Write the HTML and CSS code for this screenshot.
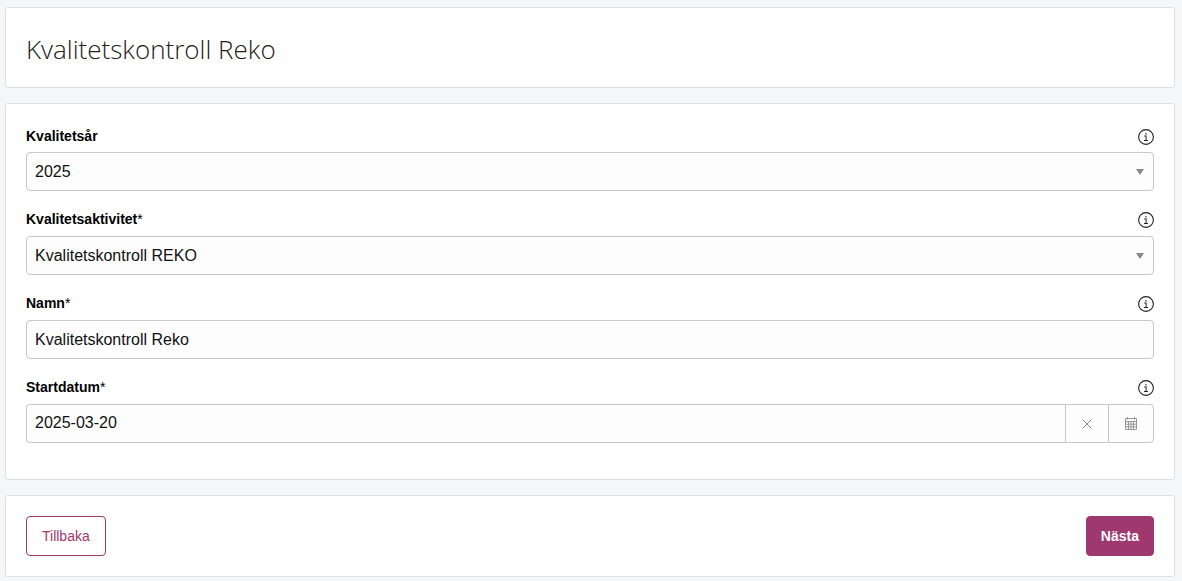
FILE: index.html
```html
<!DOCTYPE html>
<html lang="sv">

<head>
  <meta charset="UTF-8">
  <meta name="viewport" content="width=device-width, initial-scale=1.0">
  <title>Kvalitetskontroll Reko</title>
  <link rel="stylesheet" href="styles.css">
</head>

<body>

  <!-- Shared info icon -->
  <svg class="sprite" aria-hidden="true">
    <symbol id="info" viewBox="0 0 16 16">
      <circle cx="8" cy="8" r="7.4" fill="none" stroke="#222" stroke-width="1.1" />
      <path d="M7.3 4.2h1.4v1.2H7.3zM6.2 6.6h2.4V11H10v.9H6V11h1.6V7.5H6.2z" fill="#222" />
    </symbol>
  </svg>

  <header class="card">
    <h1>Kvalitetskontroll Reko</h1>
  </header>

  <form id="qualityForm">
    <div class="card fields">
      <div class="field">
        <div class="field-head">
          <label for="year">Kvalitetsår</label>
          <button type="button" class="info" aria-label="Info om kvalitetsår"><svg><use href="#info" /></svg></button>
        </div>
        <select id="year" class="control">
          <option>2025</option>
        </select>
      </div>

      <div class="field">
        <div class="field-head">
          <label for="activity">Kvalitetsaktivitet<span class="required">*</span></label>
          <button type="button" class="info" aria-label="Info om kvalitetsaktivitet"><svg><use href="#info" /></svg></button>
        </div>
        <select id="activity" class="control">
          <option>Kvalitetskontroll REKO</option>
        </select>
      </div>

      <div class="field">
        <div class="field-head">
          <label for="name">Namn<span class="required">*</span></label>
          <button type="button" class="info" aria-label="Info om namn"><svg><use href="#info" /></svg></button>
        </div>
        <input type="text" id="name" class="control" value="Kvalitetskontroll Reko">
      </div>

      <div class="field">
        <div class="field-head">
          <label for="startDate">Startdatum<span class="required">*</span></label>
          <button type="button" class="info" aria-label="Info om startdatum"><svg><use href="#info" /></svg></button>
        </div>
        <div class="date-group">
          <input type="text" id="startDate" class="control" value="2025-03-20">
          <button type="button" class="clear" aria-label="Rensa datum">
            <svg width="10" height="10" viewBox="0 0 10 10">
              <path d="M.5 .5l9 9M9.5 .5l-9 9" stroke="#888" fill="none" />
            </svg>
          </button>
          <button type="button" class="calendar" aria-label="Välj datum">
            <svg width="12" height="13" viewBox="0 0 12 13">
              <path d="M.5 1.5h11v11H.5zM.5 4.5h11M.5 7.2h11M.5 9.8h11M3.5 4.5v8M6 4.5v8M8.5 4.5v8M2.5 0v2.5M9.5 0v2.5" stroke="#999" fill="none" />
            </svg>
          </button>
        </div>
      </div>
    </div>

    <div class="card actions">
      <button type="button" class="btn">Tillbaka</button>
      <button type="submit" class="btn btn-primary">Nästa</button>
    </div>
  </form>

</body>

</html>
```

FILE: styles.css
```css
* {
  box-sizing: border-box;
}

body {
  margin: 0;
  padding: 7px 7px 0 5px;
  background: #f5f6f8;
  color: #000;
  font-family: "Liberation Sans", Arial, sans-serif;
  font-size: 14px;
}

.sprite {
  display: none;
}

.card {
  margin-bottom: 15px;
  padding: 20px;
  background: #fff;
  border: 1px solid #dedfe0;
  border-radius: 3px;
}

h1 {
  margin: 0;
  padding-top: 3px;
  color: #222;
  font-family: "Segoe UI Light", "Open Sans", sans-serif;
  font-size: 26px;
  font-weight: 300;
  line-height: 36px;
}

.fields {
  padding-bottom: 36px;
}

.field + .field {
  margin-top: 16px;
}

.field-head {
  display: flex;
  justify-content: space-between;
  height: 28px;
}

.field + .field .field-head {
  height: 29px;
}

label {
  font-weight: bold;
  line-height: 24px;
}

.required {
  font-weight: normal;
}

button {
  padding: 0;
  background: none;
  border: 0;
  font-family: inherit;
  cursor: pointer;
}

.info {
  display: flex;
  align-items: center;
  height: 26px;
}

.info svg {
  width: 16px;
  height: 16px;
}

.control {
  display: block;
  width: 100%;
  height: 39px;
  padding: 0 8px;
  background: #fdfdfd;
  border: 1px solid #c8c8c8;
  border-radius: 4px;
  color: #111;
  font-family: inherit;
  font-size: 16px;
}

select.control {
  appearance: none;
  background: #fdfdfd url("data:image/svg+xml,%3Csvg xmlns='http://www.w3.org/2000/svg' width='8' height='6'%3E%3Cpath d='M0 0h8L4 6z' fill='%23888'/%3E%3C/svg%3E") no-repeat right 9px center;
}

.date-group {
  display: flex;
}

.date-group .control {
  flex: 1;
  padding-bottom: 2px;
  border-right: 0;
  border-radius: 4px 0 0 4px;
}

.date-group button {
  display: flex;
  align-items: center;
  justify-content: center;
  border: 1px solid #c8c8c8;
  background: #fdfdfd;
}

.date-group .clear {
  width: 43px;
  border-right: 0;
}

.date-group .calendar {
  width: 46px;
  border-radius: 0 4px 4px 0;
}

.actions {
  display: flex;
  justify-content: space-between;
}

.btn {
  height: 40px;
  padding: 0 15px;
  background: #fff;
  border: 1px solid #9e386e;
  border-radius: 4px;
  color: #9e386e;
  font-size: 14px;
}

.btn-primary {
  padding: 0 14px;
  background: #9e386e;
  color: #fff;
  font-weight: bold;
}
```
